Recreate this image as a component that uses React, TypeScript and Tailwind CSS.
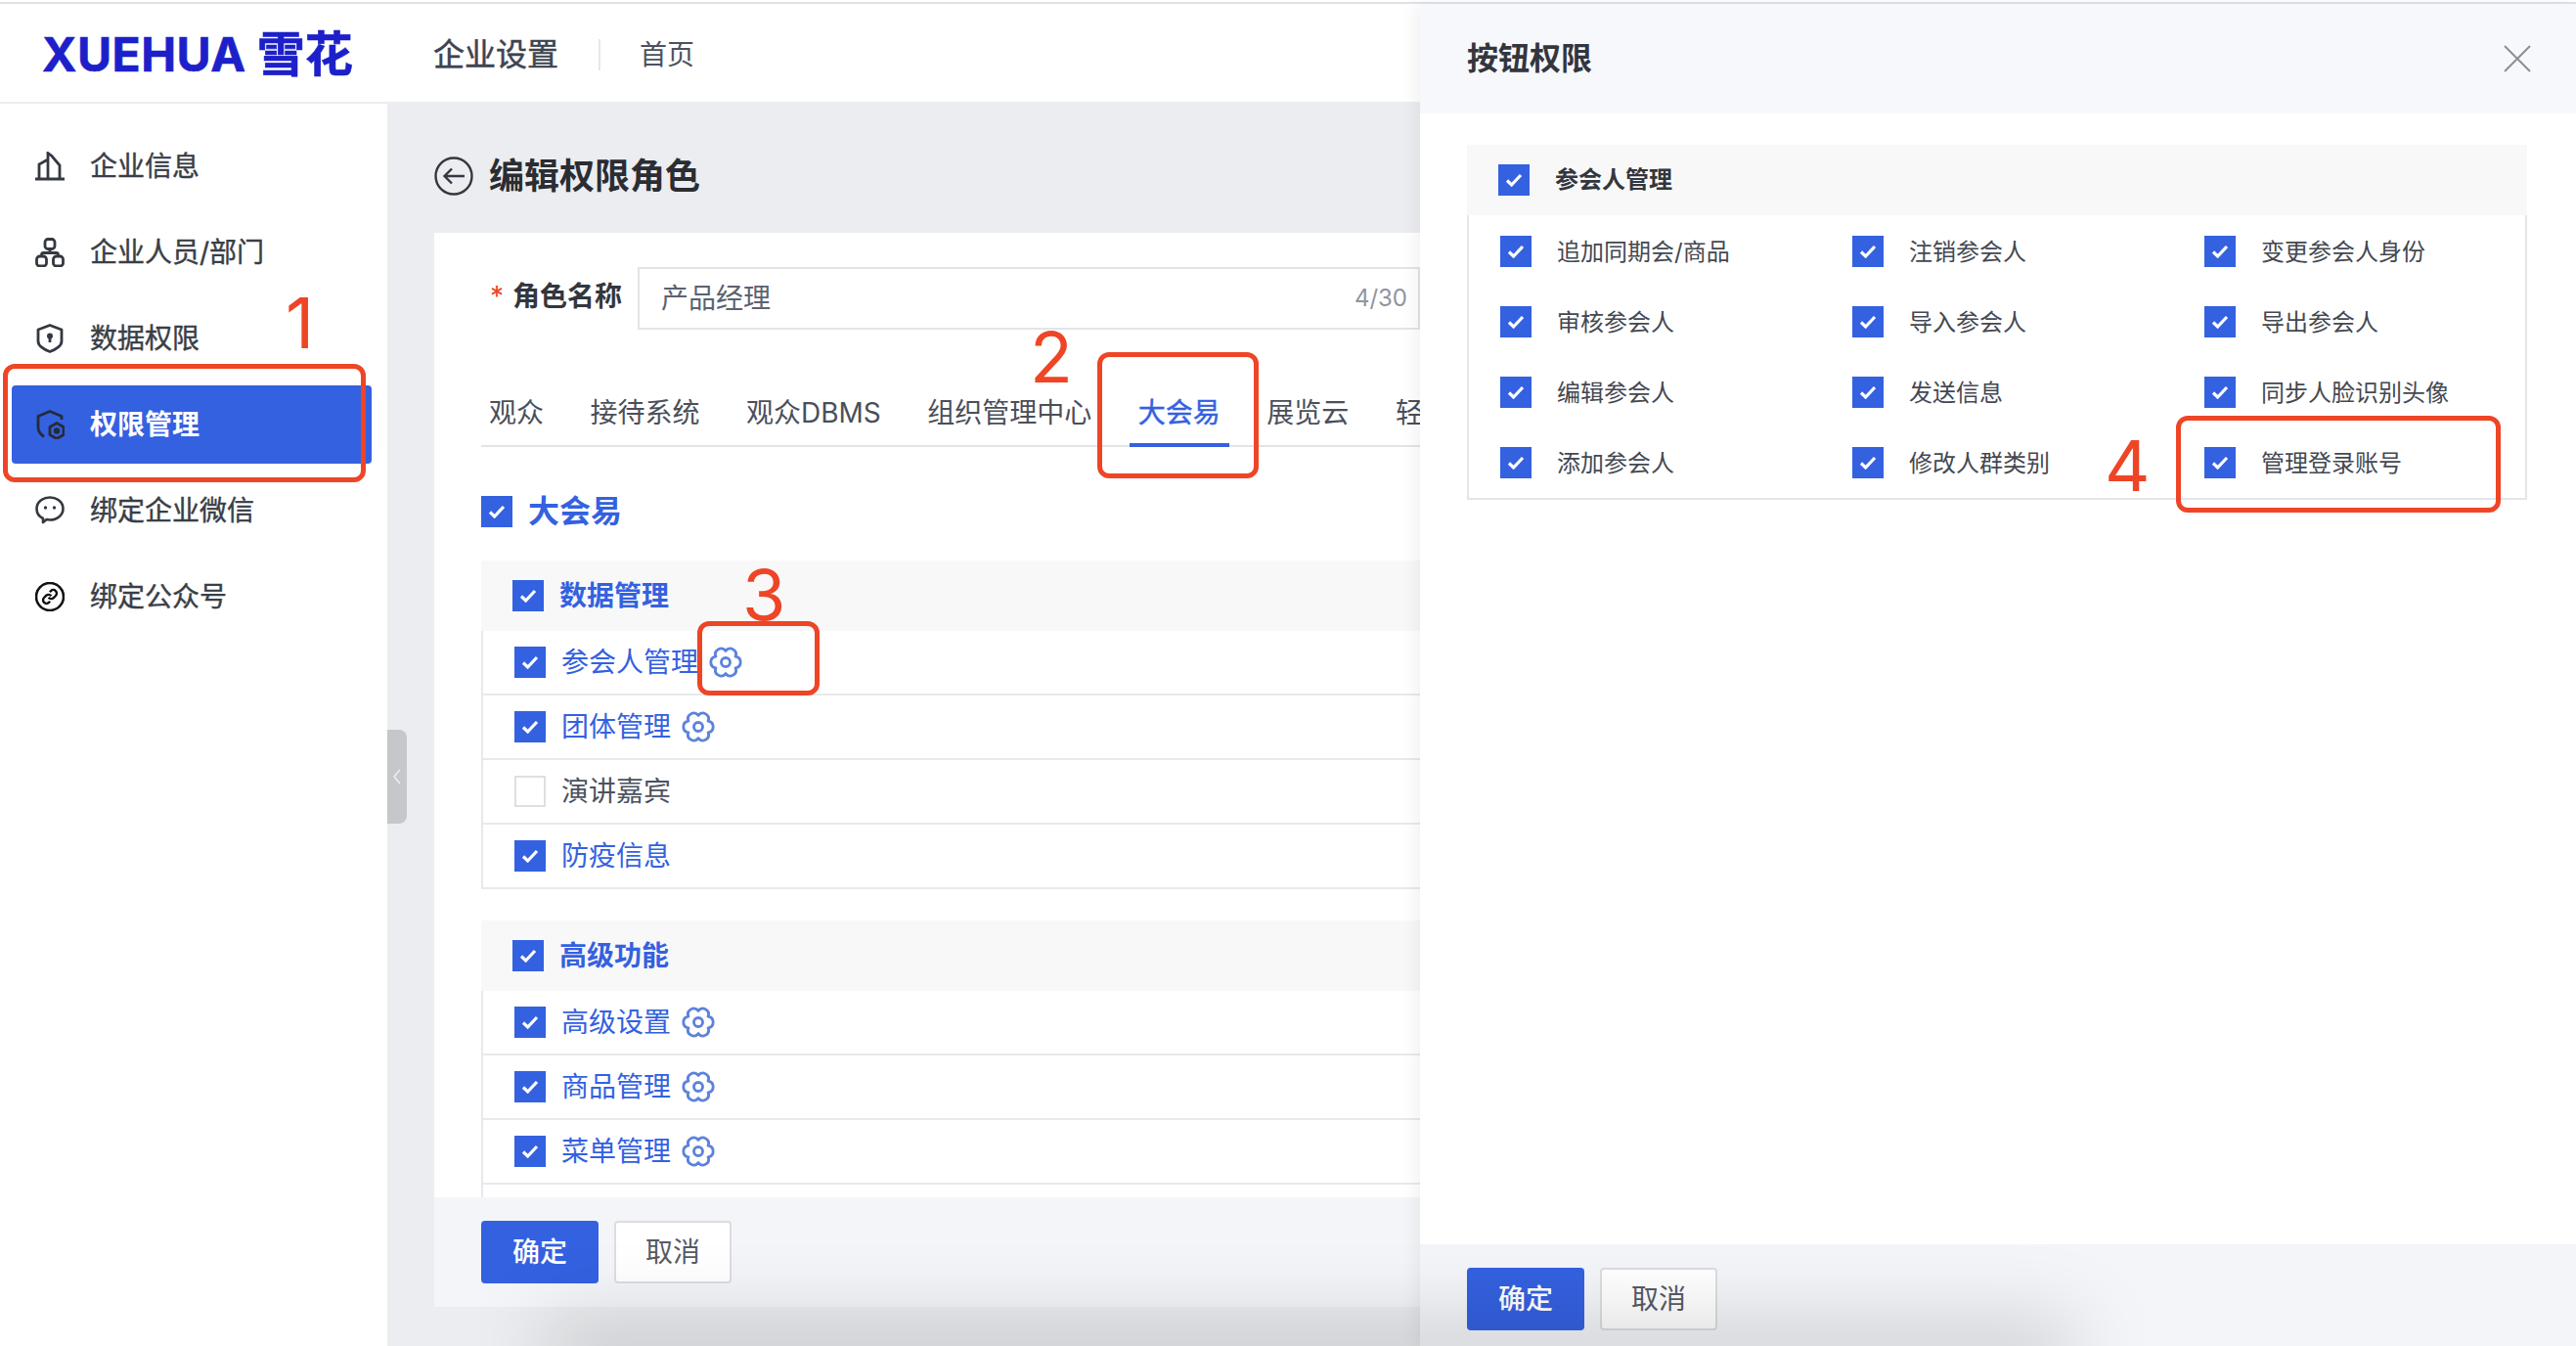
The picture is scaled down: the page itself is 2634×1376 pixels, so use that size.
import React from 'react';

const cogPath = (() => {
  // six lobed cog, lobes at 0, 60, 120... degrees
  const pt = (r: number, deg: number) => {
    const a = (deg * Math.PI) / 180;
    return `${(12 + r * Math.cos(a)).toFixed(2)} ${(12 + r * Math.sin(a)).toFixed(2)}`;
  };
  let d = `M${pt(8.2, -30)}`;
  for (let i = 0; i < 6; i++) {
    const a = i * 60;
    d += ` C${pt(12.4, a - 16)} ${pt(12.4, a + 16)} ${pt(8.2, a + 30)}`;
  }
  return d + 'Z';
})();

function Check({ checked = true }: { checked?: boolean }) {
  if (!checked) {
    return <span className="w-[32px] h-[32px] shrink-0 bg-white border-2 border-[#dedfe3]" />;
  }
  return (
    <span className="w-[32px] h-[32px] shrink-0 bg-[#3461e0] flex items-center justify-center">
      <svg width="18" height="14" viewBox="0 0 18 14" fill="none">
        <path d="M2 7.5l4.6 4.5L16 2" stroke="#fff" strokeWidth="3.2" />
      </svg>
    </span>
  );
}

function Cog() {
  return (
    <svg width="34" height="34" viewBox="0 0 24 24" fill="none" stroke="#5d82dc" strokeWidth="2" className="shrink-0">
      <path d={cogPath} strokeLinejoin="round" />
      <circle cx="12" cy="12" r="3.2" />
    </svg>
  );
}

const navIcons: Record<string, React.ReactNode> = {
  building: (
    <g>
      <path d="M0 28h30" strokeWidth="3" />
      <path d="M4 28V13l9-5M13 28V1.5l4 3 8 9.5v14" strokeWidth="2.8" />
    </g>
  ),
  org: (
    <g strokeWidth="2.8">
      <rect x="10" y="1.5" width="10" height="10" rx="3" />
      <rect x="1.5" y="19" width="10" height="10" rx="3" />
      <rect x="18.5" y="19" width="10" height="10" rx="3" />
      <path d="M15 11.5v4M6.5 19v-1.5a2 2 0 0 1 2-2h13a2 2 0 0 1 2 2V19" />
    </g>
  ),
  shield: (
    <g strokeWidth="2.8">
      <path d="M15 1.5l12 4.5v12c0 4.5-6 8.5-12 10.5C9 26.500 3 22.500 3 18V6z" strokeLinejoin="round" />
      <circle cx="15" cy="12.5" r="3" fill="#343840" stroke="none" />
      <path d="M15 13v6" />
    </g>
  ),
  perm: (
    <g stroke="#262b38" strokeWidth="2.8">
      <path d="M27 10V6.5L15 1.5 3 6.5V18c0 4 2.5 7 6 9.5" strokeLinejoin="round" />
      <path d="M22 13.5l7 4v8l-7 4-7-4v-8z" strokeLinejoin="round" />
      <circle cx="22" cy="21.5" r="3.2" fill="#262b38" stroke="none" />
    </g>
  ),
  chat: (
    <g strokeWidth="2.6">
      <path d="M8 23C3.8 21 1.500 17 1.500 13 1.500 6.500 7.500 1.500 15 1.500S28.500 6.500 28.500 13 22.500 24.500 15 24.500c-1.200 0-2.200-.1-3.300-.4L8 27z" strokeLinejoin="round" />
      <circle cx="10.5" cy="12" r="1.7" fill="#343840" stroke="none" />
      <circle cx="19.5" cy="12" r="1.7" fill="#343840" stroke="none" />
    </g>
  ),
  link: (
    <g stroke="#111" strokeWidth="2.6">
      <circle cx="15" cy="15" r="14" />
      <g transform="translate(6.6 6.6) scale(0.7)" strokeWidth="3.4">
        <path d="M10 13a5 5 0 0 0 7.54.54l3-3a5 5 0 0 0-7.07-7.07l-1.72 1.71" />
        <path d="M14 11a5 5 0 0 0-7.54-.54l-3 3a5 5 0 0 0 7.07 7.07l1.71-1.71" />
      </g>
    </g>
  ),
};

const nav = [
  { icon: 'building', label: '企业信息' },
  { icon: 'org', label: '企业人员/部门' },
  { icon: 'shield', label: '数据权限' },
  { icon: 'perm', label: '权限管理', active: true },
  { icon: 'chat', label: '绑定企业微信' },
  { icon: 'link', label: '绑定公众号' },
];

const tabs = ['观众', '接待系统', '观众DBMS', '组织管理中心', '大会易', '展览云', '轻'];

const groups = [
  {
    title: '数据管理',
    rows: [
      { label: '参会人管理', on: true },
      { label: '团体管理', on: true },
      { label: '演讲嘉宾', on: false },
      { label: '防疫信息', on: true, noCog: true },
    ],
  },
  {
    title: '高级功能',
    more: true,
    rows: [
      { label: '高级设置', on: true },
      { label: '商品管理', on: true },
      { label: '菜单管理', on: true },
    ],
  },
];

const buttonPerms = [
  '追加同期会/商品', '注销参会人', '变更参会人身份',
  '审核参会人', '导入参会人', '导出参会人',
  '编辑参会人', '发送信息', '同步人脸识别头像',
  '添加参会人', '修改人群类别', '管理登录账号',
];

function Buttons() {
  return (
    <div className="flex gap-[16px]">
      <button className="w-[120px] h-[64px] rounded-[4px] bg-[#3461e0] text-white text-[28px] font-medium">确定</button>
      <button className="w-[120px] h-[64px] rounded-[4px] bg-white border-2 border-[#dcdde1] text-[#555b66] text-[28px]">取消</button>
    </div>
  );
}

function Mark({ className }: { className: string }) {
  return <div className={`absolute z-30 border-[5px] border-[#ee4527] rounded-[12px] ${className}`} />;
}

function Num({ n, className }: { n: string; className: string }) {
  return <div className={`absolute z-30 text-[#ee4527] text-[72px] leading-none font-[Inter,sans-serif] ${className}`}>{n}</div>;
}

export default function App() {
  return (
    <div className="relative w-[2634px] h-[1376px] overflow-hidden bg-white flex flex-col font-[Inter,'Noto_Sans_CJK_SC',sans-serif]">
      <div className="mt-[2px] h-[2px] bg-[#dfe1e5] shrink-0" />

      {/* Top bar */}
      <header className="h-[102px] shrink-0 pt-[3px] flex items-center bg-white border-b-2 border-[#ebedf0]">
        <div className="w-[443px] pl-[43px] flex items-center gap-[11px] text-[#1d20c9] font-bold">
          <span className="text-[48px] leading-none tracking-[0.5px] [-webkit-text-stroke:0.6px]">XUEHUA</span>
          <span className="text-[49px] leading-none [-webkit-text-stroke:0.6px]">雪花</span>
        </div>
        <span className="text-[32px] text-[#3e4450] [-webkit-text-stroke:0.5px]">企业设置</span>
        <span className="w-[2px] h-[32px] bg-[#e6e7ea] ml-[41px] mr-[40px]" />
        <span className="text-[28px] text-[#4b5260]">首页</span>
      </header>

      <div className="flex-1 flex min-h-0">
        {/* Sidebar */}
        <aside className="w-[396px] shrink-0 bg-white pt-[24px] pl-[12px] pr-[16px] flex flex-col gap-[8px]">
          {nav.map(item => (
            <div
              key={item.label}
              className={`h-[80px] flex items-center gap-[26px] pl-[24px] rounded-[4px] text-[28px] ${
                item.active ? 'bg-[#3461e0] text-white' : 'text-[#3a3e46]'
              }`}
            >
              <svg width="30" height="30" viewBox="0 0 30 30" fill="none" stroke="#343840" strokeWidth="2.4" className="shrink-0">
                {navIcons[item.icon]}
              </svg>
              <span className={item.active ? 'font-bold' : '[-webkit-text-stroke:0.4px]'}>{item.label}</span>
            </div>
          ))}
        </aside>

        {/* Main */}
        <main className="relative flex-1 min-w-0 bg-[#ebedf0] flex flex-col px-[48px] pb-[40px]">
          <div className="absolute left-0 top-[640px] w-[20px] h-[96px] rounded-r-[8px] bg-[#c5c7cb] flex items-center justify-center">
            <svg width="10" height="18" viewBox="0 0 10 18" fill="none" stroke="#eef0f2" strokeWidth="1.5">
              <path d="M8 2L2 9l6 7" />
            </svg>
          </div>

          <div className="h-[132px] shrink-0 pt-[16px] flex items-center gap-[16px]">
            <svg width="40" height="40" viewBox="0 0 40 40" fill="none" stroke="#343840" strokeWidth="2.4">
              <circle cx="20" cy="20" r="18.5" />
              <path d="M31 20H11M18 12.5L10.5 20l7.5 7.5" />
            </svg>
            <h1 className="text-[36px] font-bold text-[#2b2d33]">编辑权限角色</h1>
          </div>

          <section className="flex-1 min-h-0 bg-white flex flex-col">
            <div className="flex-1 min-h-0 overflow-hidden px-[48px] pt-[35px]">
              <div className="flex h-[64px]">
                <label className="w-[160px] pr-[16px] pt-[2px] flex items-start justify-end gap-[9px] text-[28px] font-bold text-[#33363d] leading-[56px]">
                  <span className="text-[#ee4527] font-normal">*</span>
                  <span>角色名称</span>
                </label>
                <div className="w-[800px] h-[64px] border-2 border-[#e3e4e8] flex items-center justify-between pl-[22px] pr-[11px]">
                  <span className="text-[28px] text-[#5b6270]">产品经理</span>
                  <span className="text-[24px] text-[#90949f]">4/30</span>
                </div>
              </div>

              <div className="mt-[65px] pl-[8px] pb-[13px] flex gap-[47.5px] border-b-2 border-[#e3e4e8] h-[55px] text-[28px] leading-[40px] text-[#4a4f5a]">
                {tabs.map(tab =>
                  tab === '大会易' ? (
                    <span key={tab} className="relative text-[#3461e0] [-webkit-text-stroke:0.4px]">
                      {tab}
                      <span className="absolute -left-[9px] -right-[9px] -bottom-[15px] h-[4px] bg-[#3461e0]" />
                    </span>
                  ) : (
                    <span key={tab}>{tab}</span>
                  )
                )}
              </div>

              <div className="mt-[48px] flex items-center gap-[16px]">
                <Check />
                <span className="text-[32px] leading-[36px] font-bold text-[#3461e0]">大会易</span>
              </div>

              <div className="mt-[32px] flex flex-col gap-[32px]">
                {groups.map(group => (
                  <div key={group.title}>
                    <div className="h-[72px] bg-[#f8f8f9] flex items-center pl-[32px] gap-[16px]">
                      <Check />
                      <span className="text-[28px] font-bold text-[#3461e0]">{group.title}</span>
                    </div>
                    {group.rows.map(row => (
                      <div key={row.label} className="h-[66px] border-l-2 border-b-2 border-[#e8e9ec] flex items-center pl-[32px]">
                        <Check checked={row.on} />
                        <span className={`ml-[16px] text-[28px] ${row.on ? 'text-[#3461e0]' : 'text-[#4b5260]'}`}>{row.label}</span>
                        {row.on && !row.noCog && <span className="ml-[11px] flex"><Cog /></span>}
                      </div>
                    ))}
                    {group.more && <div className="h-[66px] border-l-2 border-[#e8e9ec]" />}
                  </div>
                ))}
              </div>
            </div>

            <div className="h-[112px] shrink-0 bg-[#f3f5f9] pl-[48px] pt-[24px]">
              <Buttons />
            </div>
          </section>
        </main>
      </div>

      {/* Drawer */}
      <aside className="absolute z-10 left-[1452px] top-[4px] right-0 bottom-0 bg-white flex flex-col shadow-[-6px_0_14px_rgba(0,0,0,0.05)]">
        <div className="h-[112px] shrink-0 bg-[#f7f8fb] flex items-center justify-between pl-[48px] pr-[46px]">
          <span className="text-[32px] font-bold text-[#33363d]">按钮权限</span>
          <svg width="28" height="28" viewBox="0 0 28 28" fill="none" stroke="#8b8e95" strokeWidth="2">
            <path d="M1 1l26 26M27 1L1 27" />
          </svg>
        </div>
        <div className="flex-1 min-h-0 pl-[48px] pr-[50px] pt-[32px]">
          <div className="h-[72px] bg-[#f8f8f9] flex items-center pl-[32px] gap-[26px]">
            <Check />
            <span className="text-[24px] font-bold text-[#33363d]">参会人管理</span>
          </div>
          <div className="grid grid-cols-[360px_360px_1fr] auto-rows-[72px] pl-[32px] pt-[1px] border-x-2 border-b-2 border-[#e4e5e9]">
            {buttonPerms.map(label => (
              <div key={label} className="flex items-center gap-[26px]">
                <Check />
                <span className="text-[24px] text-[#444851] relative top-[1px]">{label}</span>
              </div>
            ))}
          </div>
        </div>
        <div className="h-[104px] shrink-0 bg-[#f3f5f9] pl-[48px] pt-[24px]">
          <Buttons />
        </div>
      </aside>

      {/* window shadow along the bottom edge */}
      <div className="absolute z-20 left-[560px] -bottom-[30px] w-[1560px] h-[50px] bg-black/20 blur-2xl pointer-events-none" />

      {/* Annotations */}
      <Mark className="left-[3px] top-[372px] w-[371px] h-[121px]" />
      <Mark className="left-[1122px] top-[360px] w-[165px] h-[129px]" />
      <Mark className="left-[713px] top-[635px] w-[125px] h-[76px]" />
      <Mark className="left-[2225px] top-[425px] w-[332px] h-[99px]" />
      <Num n="1" className="left-[292px] top-[294px]" />
      <Num n="2" className="left-[1053px] top-[329px]" />
      <Num n="3" className="left-[759px] top-[572px]" />
      <Num n="4" className="left-[2152px] top-[440px]" />
    </div>
  );
}
